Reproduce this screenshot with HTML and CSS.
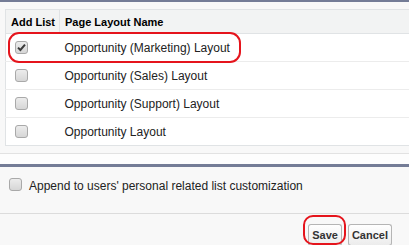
FILE: index.html
```html
<!DOCTYPE html>
<html lang="en">
<head>
  <meta charset="UTF-8">
  <title>Add Related List</title>
  <link rel="stylesheet" href="styles.css">
</head>
<body>
  <div class="top-bar"></div>

  <div class="list-area">
    <div class="table-wrap">
      <table class="layouts">
        <thead>
          <tr>
            <th class="col-add">Add List</th>
            <th class="col-name">Page Layout Name</th>
          </tr>
        </thead>
        <tbody>
          <tr>
            <td class="col-add">
              <span class="cb">
                <svg width="11" height="11" viewBox="0 0 11 11"><path d="M2 5.6 L4.4 8 L9 2.6" fill="none" stroke="#3a3a3a" stroke-width="2"/></svg>
              </span>
            </td>
            <td>Opportunity (Marketing) Layout</td>
          </tr>
          <tr>
            <td class="col-add"><span class="cb"></span></td>
            <td>Opportunity (Sales) Layout</td>
          </tr>
          <tr>
            <td class="col-add"><span class="cb"></span></td>
            <td>Opportunity (Support) Layout</td>
          </tr>
          <tr>
            <td class="col-add"><span class="cb"></span></td>
            <td>Opportunity Layout</td>
          </tr>
        </tbody>
      </table>
      <div class="mark mark-row"></div>
    </div>
  </div>
  <div class="list-foot"></div>

  <div class="divider-bar"></div>

  <div class="options">
    <label class="option"><span class="cb"></span>Append to users' personal related list customization</label>
  </div>

  <div class="actions">
    <div class="btn-wrap">
      <button type="button" class="btn">Save</button>
      <div class="mark mark-btn"></div>
    </div>
    <button type="button" class="btn">Cancel</button>
  </div>
</body>
</html>
```

FILE: styles.css
```css
body {
  font-family: "Liberation Sans", Arial, sans-serif;
  font-size: 12px;
  color: #222;
  background-color: #f8f8f8;
  margin: 0;
  padding: 0;
  overflow: hidden;
}

.top-bar {
  height: 2px;
  background-color: #747c96;
}

.list-area {
  padding: 7px 0 7px 5px;
  border-bottom: 1px solid #e2e2e2;
}

.list-foot {
  height: 10px;
  background-color: #fdfdfd;
}

.table-wrap {
  position: relative;
}

.layouts {
  width: 100%;
  table-layout: fixed;
  border-collapse: collapse;
  background-color: #fff;
  border-top: 1px solid #e0e3e5;
  border-left: 1px solid #e0e3e5;
  border-bottom: 1px solid #e0e3e5;
}

.layouts th {
  height: 23px;
  padding: 0 5px;
  text-align: left;
  font-size: 11px;
  font-weight: bold;
  white-space: nowrap;
  color: #000;
  background-color: #f2f3f3;
  border-bottom: 1px solid #e0e3e5;
}

.layouts th.col-add {
  width: 45px;
  padding: 0 3px 0 5px;
  overflow: visible;
}

.layouts th.col-name {
  border-left: 1px solid #e0e3e5;
}

.layouts td {
  height: 27px;
  padding: 0 5px;
  white-space: nowrap;
  border-bottom: 1px solid #ececec;
  vertical-align: middle;
}

.layouts tbody tr:last-child td {
  border-bottom: none;
}

.layouts td.col-add {
  padding-left: 9px;
  padding-right: 0;
}

.cb {
  display: inline-flex;
  align-items: center;
  justify-content: center;
  box-sizing: border-box;
  width: 13px;
  height: 13px;
  border: 1px solid #a9a9a9;
  border-radius: 3px;
  background: linear-gradient(#ececec, #d6d6d6);
  vertical-align: middle;
}

.layouts td .cb {
  display: flex;
}

.mark {
  position: absolute;
  box-sizing: border-box;
  border: 2px solid #e5141c;
  border-radius: 11px;
  pointer-events: none;
}

.mark-row {
  left: 3px;
  top: 23px;
  width: 233px;
  height: 31px;
}

.divider-bar {
  height: 3px;
  background-color: #747c96;
}

.options {
  height: 34px;
  padding: 12px 0 0 9px;
  border-bottom: 1px solid #dcdcdc;
}

.option {
  display: flex;
  align-items: flex-start;
  line-height: 14px;
  color: #222;
}

.option .cb {
  margin-top: -1px;
  margin-right: 7px;
}

.actions {
  display: flex;
  justify-content: flex-end;
  gap: 6px;
  padding: 10px 17px 0 0;
}

.btn-wrap {
  position: relative;
}

.btn {
  font-family: "Liberation Sans", Arial, sans-serif;
  font-size: 11px;
  font-weight: bold;
  line-height: 14px;
  color: #333;
  padding: 3px 3px;
  margin: 0;
  border: 1px solid #b5b5b5;
  border-bottom-color: #8f8f8f;
  border-radius: 3px;
  background: linear-gradient(#fff, #ececec);
  cursor: pointer;
}

.mark-btn {
  left: -5px;
  top: -9px;
  width: 43px;
  height: 30px;
  border-radius: 10px;
}
```
